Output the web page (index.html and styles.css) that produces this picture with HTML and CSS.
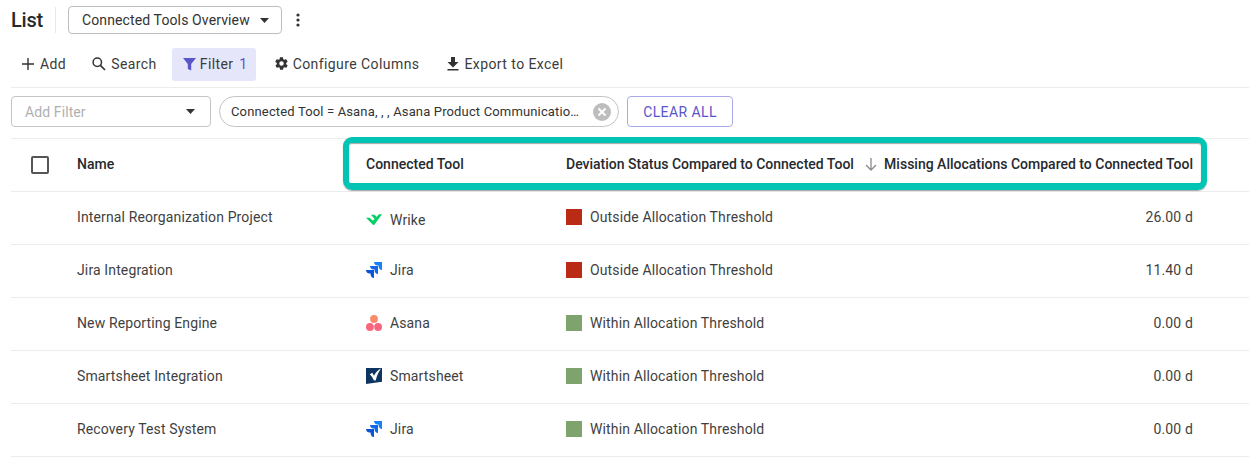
FILE: index.html
```html
<!DOCTYPE html>
<html lang="en">
<head>
<meta charset="utf-8">
<title>List</title>
<link rel="stylesheet" href="styles.css">
</head>
<body>
<div class="page">
  <header class="title-bar">
    <h1 class="title">List</h1>
    <span class="title-sep"></span>
    <button class="view-select">Connected Tools Overview
      <svg class="caret" width="9" height="5" viewBox="0 0 10 5" preserveAspectRatio="none"><path d="M0 0h10L5 5z"/></svg>
    </button>
    <svg class="kebab" width="4" height="14" viewBox="0 0 4 14"><circle cx="2" cy="2" r="1.6"/><circle cx="2" cy="7" r="1.6"/><circle cx="2" cy="12" r="1.6"/></svg>
  </header>

  <nav class="toolbar">
    <button class="tool tool-add"><svg width="12" height="12" viewBox="0 0 12 12"><path d="M5.300 0h1.400v5.300H12v1.400H6.700V12H5.300V6.700H0V5.300h5.300z"/></svg>Add</button>
    <button class="tool tool-search"><svg width="14" height="14" viewBox="0 0 14 14"><circle cx="5.300" cy="5.300" r="4.200" fill="none" stroke="#333" stroke-width="1.500"/><path d="M8.400 8.400L13 13" stroke="#333" stroke-width="1.700"/></svg>Search</button>
    <button class="tool tool-filter"><svg width="14" height="14" viewBox="0 0 14 14"><path d="M0 1h13L8.200 7v6.500l-3.400-1.600V7z"/></svg>Filter <span class="count">1</span></button>
    <button class="tool tool-cols"><svg width="15" height="15" viewBox="0 0 24 24"><path d="M19.400 13c.1-.3.1-.7.1-1s0-.7-.1-1l2.100-1.600c.2-.2.2-.4.1-.6l-2-3.500c-.1-.2-.4-.3-.6-.2l-2.500 1c-.5-.4-1.100-.7-1.700-1l-.4-2.600c0-.3-.2-.5-.5-.5h-4c-.3 0-.5.2-.5.500l-.4 2.600c-.6.3-1.200.6-1.700 1l-2.500-1c-.2-.1-.5 0-.6.2l-2 3.500c-.1.200-.1.400.1.600L4.600 11c-.1.300-.1.700-.1 1s0 .7.100 1l-2.100 1.600c-.2.200-.2.400-.1.600l2 3.500c.1.200.4.300.6.200l2.500-1c.5.400 1.100.7 1.700 1l.4 2.600c0 .3.200.5.500.5h4c.3 0 .5-.2.500-.5l.4-2.600c.6-.3 1.200-.6 1.700-1l2.500 1c.2.100.5 0 .6-.2l2-3.500c.1-.2.100-.4-.1-.6zM12 15.600a3.600 3.600 0 1 1 0-7.200 3.600 3.600 0 0 1 0 7.200z"/></svg>Configure Columns</button>
    <button class="tool tool-export"><svg width="12" height="14" viewBox="0 0 12 14"><path d="M4 0h4v5h3.500L6 10.500.5 5H4zM.5 12h11v1.600H.5z"/></svg>Export to Excel</button>
  </nav>

  <section class="filter-bar">
    <div class="add-filter"><span>Add Filter</span>
      <svg class="caret" width="9" height="5" viewBox="0 0 10 5" preserveAspectRatio="none"><path d="M0 0h10L5 5z"/></svg>
    </div>
    <div class="chip"><span class="chip-text">Connected Tool = Asana, , , Asana Product Communicatio…</span>
      <svg class="chip-x" width="18" height="18" viewBox="0 0 18 18"><circle cx="9" cy="9" r="9" fill="#bdbdbd"/><path d="M5.500 5.500l7 7M12.500 5.500l-7 7" stroke="#fff" stroke-width="2"/></svg>
    </div>
    <button class="clear-all">CLEAR ALL</button>
  </section>

  <section class="table">
    <div class="row head">
      <div class="cell-check"><span class="checkbox"></span></div>
      <div>Name</div>
      <div>Connected Tool</div>
      <div class="dev-head">Deviation Status Compared to Connected Tool
        <svg class="sort" width="12" height="13" viewBox="0 0 12 13"><path d="M6 0v12M1 7l5 5 5-5" fill="none" stroke="#8a8a8a" stroke-width="1.300"/></svg>
      </div>
      <div class="num">Missing Allocations Compared to Connected Tool</div>
    </div>

    <div class="row">
      <div></div><div>Internal Reorganization Project</div>
      <div class="tool-cell tool-low"><svg class="logo logo-wrike" width="16" height="11" viewBox="0 0 16 11"><path d="M0 3.800h3.600L7 6.800 13 .2h3L8.200 11H7.200z" fill="#08cf65"/><path d="M5 .8h3.600L11 3.200 8.900 5.400z" fill="#08cf65"/></svg><span>Wrike</span></div>
      <div class="status"><span class="swatch red"></span>Outside Allocation Threshold</div>
      <div class="num">26.00 d</div>
    </div>
    <div class="row">
      <div></div><div>Jira Integration</div>
      <div class="tool-cell"><svg class="logo" width="16" height="16" viewBox="0 0 16 16"><use href="#jira"/></svg><span>Jira</span></div>
      <div class="status"><span class="swatch red"></span>Outside Allocation Threshold</div>
      <div class="num">11.40 d</div>
    </div>
    <div class="row">
      <div></div><div>New Reporting Engine</div>
      <div class="tool-cell"><svg class="logo" width="16" height="16" viewBox="0 0 16 16"><circle cx="8" cy="4" r="3.900" fill="#fb8a6a"/><circle cx="3.900" cy="12" r="3.900" fill="#f9647f"/><circle cx="12.100" cy="12" r="3.900" fill="#f9647f"/></svg><span>Asana</span></div>
      <div class="status"><span class="swatch green"></span>Within Allocation Threshold</div>
      <div class="num">0.00 d</div>
    </div>
    <div class="row">
      <div></div><div>Smartsheet Integration</div>
      <div class="tool-cell"><svg class="logo" width="16" height="16" viewBox="0 0 16 16"><path d="M0 0h16v13.700L0 16z" fill="#0e3560"/><path d="M3.800 6.200l2.500-1.400 1.700 3C9.500 4.800 12 2 15 .6 12.800 3.500 10.800 8 9.700 12.600L7.800 12.200C6.800 10 5.500 8 3.800 6.200z" fill="#fff"/></svg><span>Smartsheet</span></div>
      <div class="status"><span class="swatch green"></span>Within Allocation Threshold</div>
      <div class="num">0.00 d</div>
    </div>
    <div class="row">
      <div></div><div>Recovery Test System</div>
      <div class="tool-cell"><svg class="logo" width="16" height="16" viewBox="0 0 16 16"><use href="#jira"/></svg><span>Jira</span></div>
      <div class="status"><span class="swatch green"></span>Within Allocation Threshold</div>
      <div class="num">0.00 d</div>
    </div>
  </section>

  <div class="highlight"></div>
</div>
<svg width="0" height="0" class="defs"><defs>
  <g id="jira">
    <path d="M8 0H16V8C14.100 8 12.600 6.500 12.600 4.600V3.400H11.400C9.500 3.400 8 1.900 8 0z" fill="#1481f7"/>
    <path d="M4 4H12V12C10.100 12 8.600 10.500 8.600 8.600V7.400H7.400C5.500 7.400 4 5.900 4 4z" fill="#1168e8"/>
    <path d="M0 8H8V16C6.100 16 4.600 14.500 4.600 12.600V11.400H3.400C1.500 11.400 0 9.900 0 8z" fill="#0b54d5"/>
  </g>
</defs></svg>
</body>
</html>
```
FILE: styles.css
```css
* { box-sizing: border-box; }
html, body { margin: 0; padding: 0; background: #fff; }
body { font-family: Roboto, "Liberation Sans", sans-serif; color: #333; font-size: 14px; overflow: hidden; }
button { font: inherit; color: inherit; background: none; border: 0; padding: 0; }
.page { position: relative; width: 1249px; height: 468px; padding-left: 11px; overflow: hidden; }
.defs { position: absolute; }

.title-bar { display: flex; align-items: center; padding-top: 6px; height: 34px; }
.title { margin: 0; font-size: 20px; font-weight: 500; line-height: 28px; color: #26292e; width: 33px; letter-spacing: -.2px; }
.title-sep { width: 1px; height: 26px; background: #e8e8e8; margin-left: 11px; }
.view-select { display: flex; align-items: center; width: 214px; height: 28px; margin-left: 12px; padding-left: 13px; border: 1px solid #bdbdbd; border-radius: 4px; letter-spacing: .12px; color: #333; }
.view-select .caret { margin-left: 10px; }
.caret path { fill: #333; }
.kebab { margin-left: 14px; fill: #333; }

.toolbar { display: flex; align-items: center; height: 33px; margin-top: 14px; }
.tool { display: flex; align-items: center; height: 33px; padding-bottom: 2px; color: #3b3b3b; letter-spacing: .42px; }
.tool svg { fill: #333; flex: none; }
.tool-add { margin-left: 11px; gap: 6px; }
.tool-search { margin-left: 26px; gap: 5px; }
.tool-filter { margin-left: 15px; padding: 0 8px 2px 11px; gap: 3px; background: #e6e6fb; border-radius: 3px; }
.tool-filter svg { fill: #5a55c9; }
.count { color: #5a55c9; margin-left: .2em; }
.tool-cols { margin-left: 18px; gap: 4px; }
.tool-export { margin-left: 28px; gap: 5px; }

.filter-bar { display: flex; align-items: flex-start; gap: 8px; height: 52px; margin-top: 6px; padding-top: 8px; border-top: 1px solid #ececec; border-bottom: 1px solid #ececec; }
.add-filter { display: flex; align-items: center; justify-content: space-between; width: 200px; height: 31px; padding: 0 15px 0 13px; border: 1px solid #c4c4c4; border-radius: 4px; color: #b0b0b0; letter-spacing: .1px; }
.chip { display: flex; align-items: center; justify-content: space-between; width: 400px; height: 31px; padding: 0 7px 0 11px; border: 1px solid #c4c4c4; border-radius: 16px; font-size: 13px; color: #333; letter-spacing: .15px; }
.clear-all { width: 106px; height: 31px; border: 1px solid #a9a9ea; border-radius: 4px; color: #5a55c9; letter-spacing: .4px; }

.row { display: grid; grid-template-columns: 66px 289px 200px 1fr 310px 56px; align-items: center; height: 53px; padding-bottom: 2px; border-bottom: 1px solid #ececec; letter-spacing: .13px; color: #3f3f3f; }
.head { font-weight: 500; color: #26292e; letter-spacing: 0; }
.cell-check { display: flex; padding-left: 20px; padding-top: 2px; }
.checkbox { width: 18px; height: 18px; border: 2px solid #555; border-radius: 2px; }
.dev-head { display: flex; align-items: center; white-space: nowrap; }
.sort { margin-left: 11px; flex: none; }
.num { text-align: right; white-space: nowrap; }
.tool-cell { display: flex; align-items: center; gap: 8px; }
.tool-low span { padding-top: 6px; }
.logo-wrike { margin-top: 4px; }
.logo { flex: none; }
.status { display: flex; align-items: center; gap: 8px; }
.swatch { width: 16px; height: 16px; flex: none; }
.red { background: #b92b15; }
.green { background: #7ea36c; }

.highlight { position: absolute; left: 343px; top: 137px; width: 864px; height: 53px; border: 6px solid #02c4b2; border-bottom-width: 7px; border-radius: 9px; box-shadow: 0 1px 1px rgba(0,0,0,.35), inset 0 1px 1px rgba(0,0,0,.35); }
```
